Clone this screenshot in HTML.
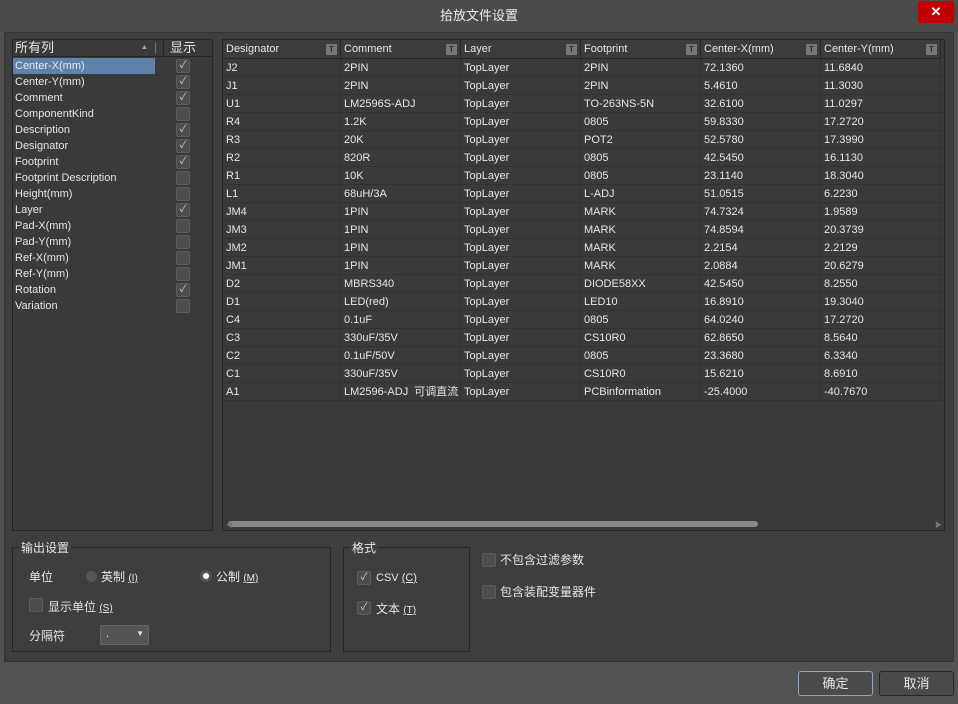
<!DOCTYPE html>
<html><head><meta charset="utf-8"><style>
*{margin:0;padding:0;box-sizing:border-box}
body{width:958px;height:704px;background:#525252;font-family:"Liberation Sans","Noto Sans CJK SC",sans-serif;font-size:11px;color:#e6e6e6;position:relative;overflow:hidden}
.a{position:absolute}
.title{left:0;top:0;width:958px;height:32px;background:#4b4b4b;text-align:center;line-height:32px;font-size:13px;color:#eee}
.close{left:918px;top:1px;width:36px;height:22px;background:#c00000;color:#fff;font-size:13px;text-align:center;line-height:22px;font-weight:bold}
.main{left:4px;top:32px;width:950px;height:630px;background:#3e3e3e;border:1px solid #333}
.list{left:12px;top:39px;width:201px;height:492px;background:#3a3a3a;border:1px solid #262626}
.lh{position:absolute;left:0;top:0;width:199px;height:17px;background:#3a3a3a;border-bottom:1px solid #262626;font-size:13px;line-height:16px}
.li{position:absolute;left:2px;height:16px;line-height:16px;font-size:11px}
.cb{position:absolute;width:14px;height:14px;background:#4c4c4c;border:1px solid #5c5c5c;border-radius:2px;color:#ccc;font-size:10px;line-height:12px;text-align:center}
.tbl{left:222px;top:39px;width:723px;height:492px;background:#3a3a3a;border:1px solid #262626;overflow:hidden}
.hd{position:absolute;top:0;height:19px;line-height:19px;padding-left:3px;border-right:1px solid #262626;border-bottom:1px solid #262626;font-size:11px;background:#3c3c3c}
.ti{position:absolute;right:3px;top:4px;width:11px;height:11px;background:#777;color:#333;font-size:8px;line-height:11px;text-align:center;font-weight:bold}
.row{position:absolute;left:0;height:18px;width:720px;border-bottom:1px solid #323232}
.c{position:absolute;top:0;height:18px;line-height:18px;padding-left:3px;border-right:1px solid #323232;white-space:nowrap;overflow:hidden}
.grp{border:1px solid #262626}
.gl{position:absolute;top:-9px;left:6px;background:#3e3e3e;padding:0 2px;font-size:12px}
.btn{height:25px;border:1px solid #262626;border-radius:3px;background:#4a4a4a;text-align:center;line-height:23px;font-size:13px}
</style></head><body>
<div class="a title">拾放文件设置</div>
<div class="a close">✕</div>
<div class="a main"></div>
<div class="a list">
<div class="lh"><span style="position:absolute;left:2px">所有列</span><span style="position:absolute;left:128px;font-size:7px;color:#aaa">▲</span><span style="position:absolute;left:142px;top:2px;width:1px;height:12px;background:#777"></span><span style="position:absolute;left:157px">显示</span><span style="position:absolute;left:150px;top:0;width:1px;height:17px;background:#262626"></span></div>
<div class="li" style="top:18px;left:0;width:142px;background:#5d83ad;padding-left:2px">Center-X(mm)</div>
</div>
<div id="L"></div>
<div class="a tbl" id="T"></div>
<div class="a" style="left:228px;top:521px;width:530px;height:6px;background:#888;border-radius:3px"></div>
<div class="a" style="left:226px;top:520px;font-size:7px;color:#777">◀</div>
<div class="a" style="left:935px;top:520px;font-size:7px;color:#777">▶</div>

<div class="a grp" style="left:12px;top:547px;width:319px;height:105px"><span class="gl">输出设置</span></div>
<div class="a" style="left:29px;top:568px;font-size:12px">单位</div>
<div class="a" style="left:86px;top:571px;width:11px;height:11px;border-radius:50%;background:#555"></div>
<div class="a" style="left:101px;top:568px;font-size:12px">英制 <u style="font-size:10px">(I)</u></div>
<div class="a" style="left:200px;top:570px;width:12px;height:12px;border-radius:50%;background:#555;border:3px solid #555"><div style="width:6px;height:6px;background:#fff;border-radius:50%"></div></div>
<div class="a" style="left:216px;top:568px;font-size:12px">公制 <u style="font-size:10px">(M)</u></div>
<div class="cb" style="left:29px;top:598px"></div>
<div class="a" style="left:48px;top:598px;font-size:12px">显示单位 <u style="font-size:10px">(S)</u></div>
<div class="a" style="left:29px;top:627px;font-size:12px">分隔符</div>
<div class="a" style="left:100px;top:625px;width:49px;height:20px;background:#555;border:1px solid #666;border-radius:2px;font-size:11px;padding-left:5px;line-height:16px">.<span style="position:absolute;right:4px;top:0;font-size:8px">▼</span></div>

<div class="a grp" style="left:343px;top:547px;width:127px;height:105px"><span class="gl">格式</span></div>
<div class="cb" style="left:357px;top:571px">✓</div>
<div class="a" style="left:376px;top:572px;font-size:11px">CSV <u>(C)</u></div>
<div class="cb" style="left:357px;top:601px">✓</div>
<div class="a" style="left:376px;top:600px;font-size:12px">文本 <u style="font-size:10px">(T)</u></div>

<div class="cb" style="left:482px;top:553px;background:#4d4d4d"></div>
<div class="a" style="left:500px;top:551px;font-size:12px">不包含过滤参数</div>
<div class="cb" style="left:482px;top:585px;background:#4d4d4d"></div>
<div class="a" style="left:500px;top:583px;font-size:12px">包含装配变量器件</div>

<div class="a btn" style="left:798px;top:671px;width:75px;border-color:#8aa8c8">确定</div>
<div class="a btn" style="left:879px;top:671px;width:75px">取消</div>
<script>
var items=[["Center-X(mm)",1],["Center-Y(mm)",1],["Comment",1],["ComponentKind",0],["Description",1],["Designator",1],["Footprint",1],["Footprint Description",0],["Height(mm)",0],["Layer",1],["Pad-X(mm)",0],["Pad-Y(mm)",0],["Ref-X(mm)",0],["Ref-Y(mm)",0],["Rotation",1],["Variation",0]];
var h="";items.forEach(function(it,i){var y=58+i*16;if(i>0)h+='<div class="a" style="left:15px;top:'+y+'px;line-height:16px">'+it[0]+'</div>';h+='<div class="cb" style="left:176px;top:'+(y+1)+'px">'+(it[1]?'✓':'')+'</div>';});
document.getElementById("L").innerHTML=h;
var cols=[["Designator",118],["Comment",120],["Layer",120],["Footprint",120],["Center-X(mm)",120],["Center-Y(mm)",120]];
var rows=[["J2","2PIN","TopLayer","2PIN","72.1360","11.6840"],["J1","2PIN","TopLayer","2PIN","5.4610","11.3030"],["U1","LM2596S-ADJ","TopLayer","TO-263NS-5N","32.6100","11.0297"],["R4","1.2K","TopLayer","0805","59.8330","17.2720"],["R3","20K","TopLayer","POT2","52.5780","17.3990"],["R2","820R","TopLayer","0805","42.5450","16.1130"],["R1","10K","TopLayer","0805","23.1140","18.3040"],["L1","68uH/3A","TopLayer","L-ADJ","51.0515","6.2230"],["JM4","1PIN","TopLayer","MARK","74.7324","1.9589"],["JM3","1PIN","TopLayer","MARK","74.8594","20.3739"],["JM2","1PIN","TopLayer","MARK","2.2154","2.2129"],["JM1","1PIN","TopLayer","MARK","2.0884","20.6279"],["D2","MBRS340","TopLayer","DIODE58XX","42.5450","8.2550"],["D1","LED(red)","TopLayer","LED10","16.8910","19.3040"],["C4","0.1uF","TopLayer","0805","64.0240","17.2720"],["C3","330uF/35V","TopLayer","CS10R0","62.8650","8.5640"],["C2","0.1uF/50V","TopLayer","0805","23.3680","6.3340"],["C1","330uF/35V","TopLayer","CS10R0","15.6210","8.6910"],["A1","LM2596-ADJ &nbsp;可调直流","TopLayer","PCBinformation","-25.4000","-40.7670"]];
var t="",x=0;cols.forEach(function(c){t+='<div class="hd" style="left:'+x+'px;width:'+c[1]+'px">'+c[0]+'<span class="ti">T</span></div>';x+=c[1];});
rows.forEach(function(r,i){var y=19+i*18;t+='<div class="row" style="top:'+y+'px">';var x=0;r.forEach(function(v,j){t+='<div class="c" style="left:'+x+'px;width:'+cols[j][1]+'px">'+v+'</div>';x+=cols[j][1];});t+='</div>';});
document.getElementById("T").innerHTML=t;
</script>
</body></html>
